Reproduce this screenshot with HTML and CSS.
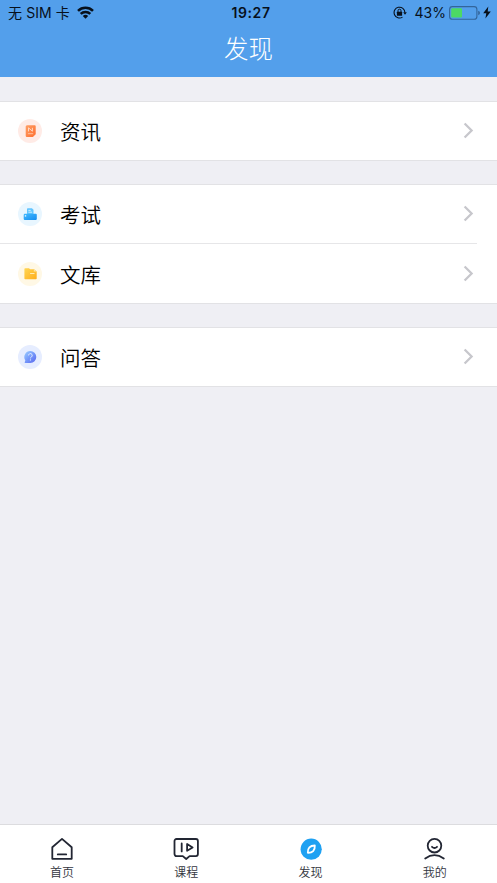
FILE: index.html
```html
<!DOCTYPE html>
<html lang="zh-CN">
<head>
<meta charset="utf-8">
<title>发现</title>
<link rel="stylesheet" href="styles.css">
</head>
<body>
<div class="app">
  <header class="header">
    <div class="status">
      <div class="status-left">
        <span>无 SIM 卡</span>
        <svg class="wifi" width="17" height="13" viewBox="0 0 17 13" fill="none" stroke="#07101b" stroke-width="2.5"><path d="M1 4.8a10.6 10.6 0 0 1 15 0M3.7 7.9a6.8 6.8 0 0 1 9.6 0"/><path d="M8.5 12.7 5.8 10a3.9 3.9 0 0 1 5.4 0z" fill="#07101b" stroke="none"/></svg>
      </div>
      <span class="time">19:27</span>
      <div class="status-right">
        <svg class="lock" width="14" height="13" viewBox="0 0 14 13" fill="none" stroke="#07101b"><path d="M9.5 11.1a5.4 5.4 0 1 1 2.4-4.6" stroke-width="1.1"/><path d="M10.2 6.2h3.6L12 8.8z" fill="#07101b" stroke="none"/><rect x="3.9" y="5.7" width="5.2" height="4" rx=".5" fill="#07101b" stroke="none"/><path d="M5 6V4.7a1.5 1.5 0 0 1 3 0V6" stroke-width="1"/></svg>
        <span class="percent">43%</span>
        <svg class="battery" width="32" height="14" viewBox="0 0 32 14"><rect x=".6" y=".6" width="27.3" height="12.6" rx="2.8" fill="none" stroke="#33659a" stroke-width="1.1"/><rect x="2.2" y="2.2" width="10.8" height="9.4" rx="1" fill="#4cd964"/><path d="M29.2 4.8q1.8.6 1.8 2.2t-1.8 2.2z" fill="#33659a"/></svg>
        <svg class="bolt" width="8" height="13" viewBox="0 0 8 13"><path d="M5.3.5.2 7.3h3.1L2.4 12.5 7.8 5.4H4.7z" fill="#07101b"/></svg>
      </div>
    </div>
    <h1 class="title">发现</h1>
  </header>

  <main class="content">
    <section class="group">
      <a class="row">
        <svg class="row-icon" viewBox="0 0 24 24"><defs><linearGradient id="orange" x1="0" y1="0" x2="1" y2="1"><stop stop-color="#ffa066"/><stop offset="1" stop-color="#ff6c2d"/></linearGradient></defs><circle cx="12" cy="12" r="12" fill="#ffebe6"/><path d="M9 6.2h7.7a1 1 0 0 1 1 1V15l-3 3H8.9a1.2 1.2 0 0 1-1.2-1.2V7.6A1.4 1.4 0 0 1 9 6.2z" fill="url(#orange)"/><path d="M14.7 18v-2q0-1 1-1h2z" fill="#ff7b3c"/><path d="M10.5 12.4V8.8l3.9 3.4V8.8" fill="none" stroke="#ffe0ce" stroke-width=".9"/><path d="M9.9 14.7h5.3" stroke="#ffd1b5" stroke-width=".8"/></svg>
        <span class="label">资讯</span>
        <svg class="chevron" viewBox="0 0 11 17"><path d="m1.6 1.5 7 7-7 7"/></svg>
      </a>
    </section>
    <section class="group">
      <a class="row">
        <svg class="row-icon" viewBox="0 0 24 24"><defs><linearGradient id="blue" x1="0" y1="0" x2="1" y2="1"><stop stop-color="#42baff"/><stop offset="1" stop-color="#168df0"/></linearGradient></defs><circle cx="12" cy="12" r="12" fill="#e8f6ff"/><path d="M9.8 6.2h4.1l1.6 1.5V13H9V7a.8.8 0 0 1 .8-.8z" fill="#62c5ff"/><path d="M10.4 8.4h2.3M10.4 10.2H14" stroke="#e9f8ff" stroke-width=".8"/><path d="M6.8 11.8h11a1 1 0 0 1 1 1v4.3a.8.8 0 0 1-.8.8H6.5a.8.8 0 0 1-.8-.8v-4.2a1.1 1.1 0 0 1 1.1-1.1z" fill="url(#blue)"/><circle cx="7.5" cy="13.9" r=".8" fill="#d9f1ff"/></svg>
        <span class="label">考试</span>
        <svg class="chevron" viewBox="0 0 11 17"><path d="m1.6 1.5 7 7-7 7"/></svg>
      </a>
      <a class="row divided">
        <svg class="row-icon" viewBox="0 0 24 24"><defs><linearGradient id="yellow" x1="0" y1="0" x2="1" y2="1"><stop stop-color="#ffd653"/><stop offset="1" stop-color="#ffae1c"/></linearGradient></defs><circle cx="12" cy="12" r="12" fill="#fff8e5"/><path d="M7.3 6.2h3.6l1.4 1h3.8l2.6 2.3v7a.8.8 0 0 1-.8.8H7.2a.8.8 0 0 1-.8-.8V7.1q0-.9.9-.9z" fill="url(#yellow)"/><path d="M15.8 7.3v2.3h2.8z" fill="#ffe8a0"/><path d="M12.1 11.5h4.4" fill="none" stroke="#fff0c4" stroke-width=".9"/></svg>
        <span class="label">文库</span>
        <svg class="chevron" viewBox="0 0 11 17"><path d="m1.6 1.5 7 7-7 7"/></svg>
      </a>
    </section>
    <section class="group">
      <a class="row">
        <svg class="row-icon" viewBox="0 0 24 24"><defs><linearGradient id="violet" x1="0" y1="0" x2="1" y2="1"><stop stop-color="#9cd0ff"/><stop offset=".5" stop-color="#7598fa"/><stop offset="1" stop-color="#5a65ed"/></linearGradient></defs><circle cx="12" cy="12" r="12" fill="#e6edff"/><path d="M12.3 6a6 6 0 1 1 0 12H7.1q-.8-.1-.3-.9l.5-1.8A6 6 0 0 1 12.3 6z" fill="url(#violet)"/><path d="M10.6 10.4a1.8 1.8 0 1 1 2.8 1.5q-.9.5-.9 1.4" fill="none" stroke="#eaf0ff" stroke-width="1"/><circle cx="12.4" cy="14.9" r=".6" fill="#eaf0ff"/></svg>
        <span class="label">问答</span>
        <svg class="chevron" viewBox="0 0 11 17"><path d="m1.6 1.5 7 7-7 7"/></svg>
      </a>
    </section>
  </main>

  <nav class="tabs">
    <a class="tab">
      <svg class="tab-icon" viewBox="0 0 26 24"><path d="M3.3 10.2 13 1.9l9.7 8.3v11.6H3.3z"/><path d="M8.8 17.4h8.4"/></svg>
      <span>首页</span>
    </a>
    <a class="tab">
      <svg class="tab-icon" viewBox="0 0 26 24"><path d="M3.5 2h19.4a2 2 0 0 1 2 2v13.1a2 2 0 0 1-2 2h-6.3L13.2 22l-3.4-2.9H3.5a2 2 0 0 1-2-2V4a2 2 0 0 1 2-2z"/><path d="M8.7 6.4v8M14.1 7v6.8l5.5-3.4z"/></svg>
      <span>课程</span>
    </a>
    <a class="tab">
      <svg class="tab-icon" viewBox="0 0 26 24"><circle class="disc" cx="13.2" cy="12.2" r="10.6"/><path class="needle" d="M16.8 8.5c.2 2.6-.3 4.3-1.6 5.6-1.3 1.3-3 1.8-5.4 1.7-.2-2.4.3-4.2 1.6-5.5 1.3-1.3 3-1.8 5.4-1.8z"/></svg>
      <span>发现</span>
    </a>
    <a class="tab">
      <svg class="tab-icon" viewBox="0 0 26 24"><circle cx="12.5" cy="8.7" r="6.8"/><path d="M10 9.8q2.5 2.3 5 0M3.2 21.5q9.3-6.6 18.6 0"/></svg>
      <span>我的</span>
    </a>
  </nav>
</div>
</body>
</html>
```
FILE: styles.css
```css
* { box-sizing: border-box; }
body {
  margin: 0;
  background: #efeff4;
  font-family: Inter, "Noto Sans CJK SC", sans-serif;
  color: #000;
}
.app { display: flex; flex-direction: column; height: 883px; overflow: hidden; }
.header { height: 77px; flex: none; background: #539feb; }
.status {
  display: grid;
  grid-template-columns: 1fr auto 1fr;
  align-items: center;
  height: 25px;
  padding: 0 6px 0 8px;
  font-size: 14px;
  line-height: 20px;
  color: #07101b;
}
.status-left, .status-right { display: flex; align-items: center; }
.status-left { gap: 7px; letter-spacing: .1px; }
.status-right { justify-content: flex-end; }
.time { margin-left: 3px; font-weight: 600; font-size: 14px; letter-spacing: .6px; }
.percent { margin: 0 3px 0 8px; font-size: 14px; }
.bolt { margin-left: 2px; }
.title {
  margin: 5px 0 0;
  text-align: center;
  font-size: 24.5px;
  line-height: 38px;
  font-weight: 300;
  color: #fff;
}
.content { flex: 1; padding-top: 24px; }
.group {
  margin-bottom: 23px;
  background: #fff;
  border-top: 1px solid #e2e2e5;
  border-bottom: 1px solid #e2e2e5;
}
.row { display: flex; align-items: center; height: 58px; padding: 0 23px 0 18px; }
.divided {
  height: 60px;
  padding-top: 2px;
  background: linear-gradient(#e6e6e8, #e6e6e8) 0 0 / 477px 1px no-repeat;
}
.row-icon { width: 24px; height: 24px; }
.label { flex: 1; margin-left: 18px; padding-top: 4px; font-size: 20.5px; line-height: 30px; font-weight: 350; }
.chevron { width: 11px; height: 17px; margin-bottom: 1px; fill: none; stroke: #c7c7cc; stroke-width: 2.3; }
.tabs { display: flex; flex: none; height: 59px; border-top: 1px solid #dcdcdf; background: #fff; }
.tab {
  display: flex;
  flex: 1;
  flex-direction: column;
  align-items: center;
  padding-top: 12px;
  font-size: 12px;
  line-height: 18px;
  font-weight: 350;
  color: #333640;
}
.tab-icon {
  width: 26px;
  height: 24px;
  margin-bottom: 3px;
  fill: none;
  stroke: #222633;
  stroke-width: 1.8;
  stroke-linecap: round;
  stroke-linejoin: round;
}
.disc { fill: #1fa1f2; stroke: none; }
.needle { stroke: #fff; stroke-width: 1.8; }
```
